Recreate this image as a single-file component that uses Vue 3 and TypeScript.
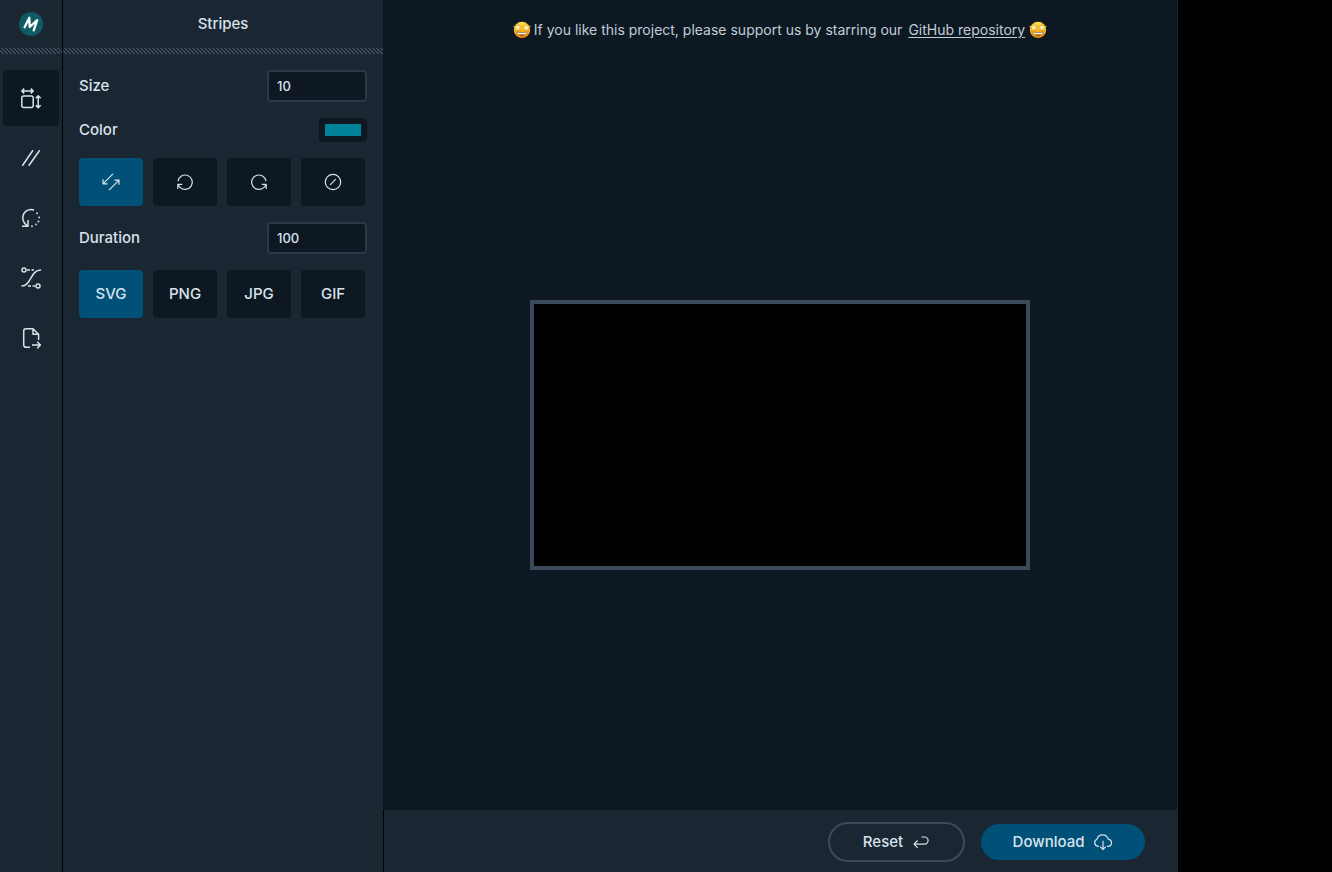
<script setup lang="ts">
import { ref } from 'vue'

const tabs = ['Dimensions', 'Stripes', 'Rotation', 'Easing', 'Export'] as const
const formats = ['SVG', 'PNG', 'JPG', 'GIF'] as const
const motions = ['Linear', 'Counterclockwise', 'Clockwise', 'None'] as const

const activeTab = ref<string>('Dimensions')
const format = ref<string>('SVG')
const motion = ref<string>('Linear')
const size = ref<string>('10')
const duration = ref<string>('100')
const color = ref<string>('#008299')

function reset(): void {
  size.value = '10'
  duration.value = '100'
  color.value = '#008299'
  format.value = 'SVG'
  motion.value = 'Linear'
}
</script>

<template>
  <div class="app">
    <nav class="rail" aria-label="Tools">
      <div class="brand">
        <svg class="logo" viewBox="0 0 24 24" aria-hidden="true">
          <circle cx="12" cy="12" r="12" fill="#0d5c63" />
          <path d="M5.600 15.200 10.300 5.800 10.700 15 18.200 8.200 14.700 18.400" fill="none" stroke="#fff" stroke-width="2.300" stroke-linecap="round" stroke-linejoin="round" />
        </svg>
      </div>
      <div class="hatch"></div>
      <div class="tabs">
        <button v-for="tab in tabs" :key="tab" type="button" class="tab" :class="{ active: activeTab === tab }" :aria-label="tab" @click="activeTab = tab">
          <svg v-if="tab === 'Dimensions'" viewBox="0 0 24 24">
            <rect x="2.800" y="10" width="11.400" height="11.400" rx="2" />
            <path d="M3 5h11M5.200 2.600 2.800 5l2.400 2.400M11.800 2.600 14.200 5l-2.400 2.400M19.200 10v11.400M16.800 12.200l2.400-2.400 2.400 2.400M16.800 19.200l2.400 2.400 2.400-2.400" />
          </svg>
          <svg v-else-if="tab === 'Stripes'" viewBox="0 0 24 24">
            <path d="M3.300 19.800 14 4.300M9.700 19.800l11-15.500" />
          </svg>
          <svg v-else-if="tab === 'Rotation'" viewBox="0 0 24 24">
            <path d="M15 4A8.300 8.300 0 0 0 3.800 11.700c0 3.400 1.700 6 4.700 8.200M9 14v6.300H3" />
            <path d="M18 7.200v.1M20.200 11.300v.1M19.500 15.500v.1M17 18.400v.1M13 20.200v.1" stroke-linecap="round" stroke-width="1.800" />
          </svg>
          <svg v-else-if="tab === 'Easing'" viewBox="0 0 24 24">
            <circle cx="5" cy="4" r="2" /><circle cx="19" cy="20" r="2" />
            <path d="M8 4h3M12.500 4h2.500M9 20h3M13.500 20h2.500M2.500 20c10 0 8.500-16 19.500-16" />
          </svg>
          <svg v-else viewBox="0 0 24 24">
            <path d="M11 21.300H7A2.300 2.300 0 0 1 4.700 19V5A2.300 2.300 0 0 1 7 2.700h7l5.600 5.600V14M14 3v5.300h5.500M13 19h8.500M18.200 15.800l3.200 3.200-3.200 3.200" />
          </svg>
        </button>
      </div>
    </nav>

    <aside class="panel">
      <h1 class="title">Stripes</h1>
      <div class="hatch"></div>
      <form class="controls" @submit.prevent>
        <div class="row">
          <label for="size">Size</label>
          <input id="size" v-model="size" class="field" type="text" inputmode="numeric" />
        </div>
        <div class="row">
          <label for="color">Color</label>
          <input id="color" v-model="color" class="swatch" type="color" />
        </div>
        <div class="options" role="group" aria-label="Motion">
          <button v-for="item in motions" :key="item" type="button" class="option" :class="{ active: motion === item }" :aria-label="item" :aria-pressed="motion === item" @click="motion = item">
            <svg v-if="item === 'Linear'" viewBox="0 0 18 18">
              <path d="M11 .8 1 10.800M1 6.200v4.600h4.600M7 17.200 17 7.200M12.400 7.200H17v4.600" />
            </svg>
            <svg v-else-if="item === 'Counterclockwise'" viewBox="0 0 18 18">
              <path d="M2 8.200A7.200 7.200 0 1 1 4 14.300L1.800 11.600M1.800 16v-4.600h4.400" />
            </svg>
            <svg v-else-if="item === 'Clockwise'" viewBox="0 0 18 18">
              <path d="M16 8.200A7.200 7.200 0 1 0 14 14.300l2.200-2.700M16.200 16v-4.600h-4.400" />
            </svg>
            <svg v-else viewBox="0 0 18 18">
              <circle cx="9" cy="9" r="7.700" /><path d="m6.200 11.800 5.600-5.600" />
            </svg>
          </button>
        </div>
        <div class="row">
          <label for="duration">Duration</label>
          <input id="duration" v-model="duration" class="field" type="text" inputmode="numeric" />
        </div>
        <div class="options" role="group" aria-label="Format">
          <button v-for="item in formats" :key="item" type="button" class="option" :class="{ active: format === item }" :aria-pressed="format === item" @click="format = item">{{ item }}</button>
        </div>
      </form>
    </aside>

    <main class="main">
      <p class="notice">
        <svg class="emoji" viewBox="0 0 18 18" aria-hidden="true"><use href="#star-face" /></svg>
        <span>If you like this project, please support us by starring our</span>
        <a href="#repository">GitHub repository</a>
        <svg class="emoji" viewBox="0 0 18 18" aria-hidden="true">
          <defs>
            <linearGradient id="face" x1="0" y1="0" x2="0" y2="1">
              <stop offset="0" stop-color="#ffe04a" /><stop offset=".55" stop-color="#f9b424" /><stop offset="1" stop-color="#d9780a" />
            </linearGradient>
            <g id="star-face">
              <circle cx="9" cy="9" r="8.200" fill="url(#face)" />
              <path d="m4.800 2.700 1.100 2.400 2.600.3-1.900 1.800.5 2.600-2.300-1.200-2.300 1.200.4-2.600L.4 5.200l3-.1zM13.200 2.700l1.100 2.400 3.300.1-2.600 2 .5 2.600-2.300-1.200-2.300 1.200.4-2.600-1.900-1.800 2.700-.3z" fill="#fff0a8" stroke="#d08a18" stroke-width=".5" />
              <path d="M3.700 10.600q5.300 1.500 10.600 0c-.4 5.400-10.200 5.400-10.600 0z" fill="#8a5218" />
              <path d="M4.300 11.300q4.700 1 9.400 0l-.8 1.900H5.100z" fill="#fff" />
            </g>
          </defs>
          <use href="#star-face" />
        </svg>
      </p>
      <div class="canvas"><div class="preview"></div></div>
      <footer class="actions">
        <button type="button" class="action reset" @click="reset">
          Reset
          <svg viewBox="0 0 18 18"><path d="M9.500 4h3a3.200 3.200 0 0 1 0 7.200H2.300M5.600 7.500 2 11.200l3.600 3.600" /></svg>
        </button>
        <button type="button" class="action download">
          Download
          <svg viewBox="0 0 20 18"><path d="M6 13.300H5A3.700 3.700 0 0 1 4 6.200C4.600 3.500 7 1.800 9.500 1.800c3 0 5 1.700 5.800 4.300 4.300.8 4.400 6.600.2 7.200H14M10 7.800v8.500M7.300 13.700l2.700 2.800 2.700-2.800" /></svg>
        </button>
      </footer>
    </main>
  </div>
</template>

<style>
body {
  margin: 0;
  background: #000;
}
</style>

<style scoped>
.app {
  display: grid;
  grid-template-columns: 62px 320px minmax(0, 1fr);
  column-gap: 1px;
  min-height: 100vh;
  box-sizing: border-box;
  padding-right: 154px;
  background: #000;
  color: #d8e2ec;
  font: 500 15px/24px Inter, "Liberation Sans", sans-serif;
}
button,
input {
  box-sizing: border-box;
  margin: 0;
  color: inherit;
  font: inherit;
}
button {
  border: 0;
  cursor: pointer;
}
svg {
  fill: none;
  stroke: currentColor;
  stroke-width: 1.2;
  stroke-linejoin: round;
  flex: none;
}
.rail,
.panel {
  background: #1a2632;
}
.brand {
  display: flex;
  align-items: center;
  justify-content: center;
  height: 48px;
}
.logo {
  width: 24px;
  height: 24px;
  stroke: none;
}
.hatch {
  height: 6px;
  background: linear-gradient(45deg, #3a4a5a 25%, transparent 25% 50%, #3a4a5a 50% 75%, transparent 75%) 0 0 / 4px 4px;
}
.tabs {
  display: flex;
  flex-direction: column;
  align-items: center;
  gap: 4px;
  padding-top: 16px;
}
.tab {
  display: flex;
  align-items: center;
  justify-content: center;
  width: 56px;
  height: 56px;
  padding: 0;
  border-radius: 4px;
  background: transparent;
}
.tab.active {
  background: #0e1822;
}
.tab svg {
  width: 24px;
  height: 24px;
  stroke-width: 1.5;
}
.title {
  margin: 0;
  padding: 12px 0;
  font-size: 15px;
  font-weight: 500;
  text-align: center;
}
.controls {
  display: flex;
  flex-direction: column;
  gap: 16px;
  padding: 16px;
}
.row {
  display: flex;
  align-items: center;
  justify-content: space-between;
}
.field {
  width: 100px;
  height: 32px;
  padding: 0 8px;
  border: 2px solid #293949;
  border-radius: 4px;
  background: #0e1822;
  font-size: 13px;
}
.swatch {
  appearance: none;
  width: 48px;
  height: 24px;
  padding: 6px;
  border: 0;
  border-radius: 4px;
  background: #0e1822;
}
.swatch::-webkit-color-swatch-wrapper {
  padding: 0;
}
.swatch::-webkit-color-swatch {
  border: 0;
  border-radius: 0;
}
.options {
  display: flex;
  gap: 10px;
}
.option {
  display: flex;
  align-items: center;
  justify-content: center;
  width: 64px;
  height: 48px;
  padding: 0;
  border-radius: 4px;
  background: #0e1822;
}
.option.active {
  background: #005078;
}
.option svg {
  width: 18px;
  height: 18px;
}
.main {
  display: flex;
  flex-direction: column;
  margin-left: -1px;
  border-right: 1px solid #1a2632;
  background: #0e1822;
}
.notice {
  display: flex;
  align-items: center;
  justify-content: center;
  box-sizing: border-box;
  height: 60px;
  margin: 0;
  color: #c0ccd8;
  font-size: 14px;
  font-weight: 400;
}
.notice a {
  margin: 0 4px 0 6px;
  color: inherit;
  text-underline-offset: 2px;
}
.notice span {
  margin-left: 3px;
}
.emoji {
  width: 18px;
  height: 18px;
  stroke: none;
}
.canvas {
  display: flex;
  flex: 1;
  align-items: center;
  justify-content: center;
}
.preview {
  box-sizing: border-box;
  width: 500px;
  height: 270px;
  border: 4px solid #3b4b5c;
  background: #000;
}
.actions {
  display: flex;
  align-items: center;
  justify-content: flex-end;
  gap: 16px;
  padding: 12px 32px 10px;
  border-left: 1px solid #000;
  background: #1a2632;
}
.action {
  display: flex;
  align-items: center;
  justify-content: center;
  gap: 9px;
  border-radius: 20px;
}
.reset {
  width: 137px;
  height: 40px;
  border: 2px solid #3b4b5c;
  background: transparent;
}
.download {
  width: 164px;
  height: 36px;
  background: #005078;
}
.reset svg {
  width: 18px;
  height: 18px;
}
.download svg {
  width: 20px;
  height: 18px;
}
</style>
